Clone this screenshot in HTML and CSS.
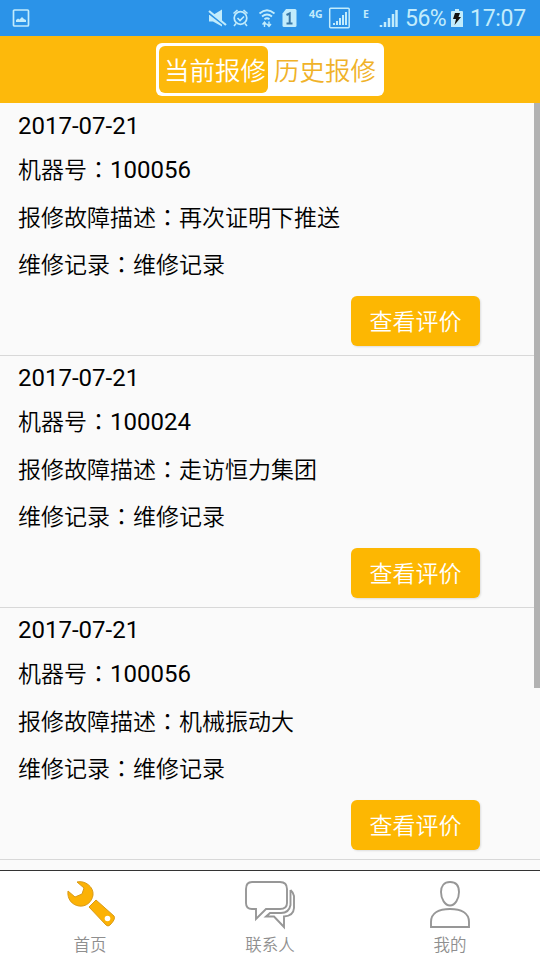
FILE: index.html
```html
<!DOCTYPE html>
<html lang="zh-CN">
<head>
  <meta charset="UTF-8"/>
  <meta content="width=device-width, initial-scale=1.0" name="viewport"/>
  <title>当前报修</title>
  <link rel="stylesheet" href="styles.css">
</head>
<body>
<div class="app">
  <div class="status-bar">
    <svg class="picture" width="18" height="18" viewBox="0 0 18 18">
      <rect x="1.500" y="1" width="15" height="16" rx="1" fill="none" stroke="currentColor" stroke-width="1.700"/>
      <path d="M4 13v-2l2-1.500 1.500 1L10 8l2 2 2 1v2z" fill="currentColor"/>
    </svg>
    <svg class="status-icons" width="170" height="36" viewBox="200 0 170 36" fill="none" stroke="currentColor">
      <path d="M209 15h4l9-5.500v17l-9-5h-4z" fill="currentColor" stroke="none"/>
      <path d="M208 12.500l18 14" stroke="#2b93e8" stroke-width="2"/>
      <path d="M209 11l17 14" stroke-width="2.200"/>
      <circle cx="240.500" cy="18" r="6.300" stroke-width="1.700"/>
      <path d="M237.500 18l2.500 2.500 4-4M233.500 13.500l4-3.500M247.500 13.500l-4-3.500M236 23.500l-2 2.500M245 23.500l2 2.500" stroke-width="1.600"/>
      <path d="M259.500 13.500q7.500-6.500 15 0M262 16.500q5-4 10 0M264.500 19.200q2.500-2 5 0" stroke-width="1.800"/>
      <path d="M264.500 27v-4M262.500 24.500l2-2.500 2 2.500M269 21.500v4M267 24l2 2.500 2-2.500" stroke-width="1.400"/>
      <path d="M286 9h9q1.500 0 1.500 1.500v15q0 1.500-1.500 1.500h-11q-1.500 0-1.500-1.500v-12z" fill="currentColor" stroke="none"/>
      <path d="M286.500 15l3.200-1.700v10.200M286.500 23.500h6" stroke="#3978a8" stroke-width="2"/>
      <rect x="329.700" y="8.200" width="19.500" height="19.500" rx="1" stroke-width="1.500"/>
      <path d="M334 25v-2M337 25v-4M340 25v-7M343 25v-10M346 25v-13" stroke-width="2"/>
    </svg>
    <span class="net net-4g">4G</span>
    <span class="net net-e">E</span>
    <svg class="signal" width="20" height="20" viewBox="0 0 20 20" stroke="currentColor" stroke-width="2.500">
      <path d="M2 19v-2M6 19v-5M10 19v-9M14 19v-13M17.500 19V2"/>
    </svg>
    <span class="percent">56%</span>
    <svg class="battery" width="12" height="18" viewBox="0 0 12 18">
      <path d="M1 2h3V0h4v2h3q1 0 1 1v15H0V3q0-1 1-1z" fill="currentColor"/>
      <path d="M4 4h5L7.500 8H10l-6.500 8 1.500-6H2z" fill="#111"/>
    </svg>
    <span class="clock">17:07</span>
  </div>

  <div class="header">
    <div class="tabs">
      <div class="tab active">当前报修</div>
      <div class="tab">历史报修</div>
    </div>
  </div>

  <div class="list">
    <div class="card">
      <div class="row date">2017-07-21</div>
      <div class="row">机器号<span class="colon" lang="zh-TW">：</span><span class="num">100056</span></div>
      <div class="row">报修故障描述<span class="colon" lang="zh-TW">：</span>再次证明下推送</div>
      <div class="row">维修记录<span class="colon" lang="zh-TW">：</span>维修记录</div>
      <div class="btn">查看评价</div>
    </div>
    <div class="card">
      <div class="row date">2017-07-21</div>
      <div class="row">机器号<span class="colon" lang="zh-TW">：</span><span class="num">100024</span></div>
      <div class="row">报修故障描述<span class="colon" lang="zh-TW">：</span>走访恒力集团</div>
      <div class="row">维修记录<span class="colon" lang="zh-TW">：</span>维修记录</div>
      <div class="btn">查看评价</div>
    </div>
    <div class="card">
      <div class="row date">2017-07-21</div>
      <div class="row">机器号<span class="colon" lang="zh-TW">：</span><span class="num">100056</span></div>
      <div class="row">报修故障描述<span class="colon" lang="zh-TW">：</span>机械振动大</div>
      <div class="row">维修记录<span class="colon" lang="zh-TW">：</span>维修记录</div>
      <div class="btn">查看评价</div>
    </div>
    <div class="scrollbar"></div>
  </div>

  <div class="nav">
    <div class="nav-item">
      <svg width="52" height="52" viewBox="0 0 52 52">
        <path d="M13 2C21 0 30 7 29 15C28 22 22 27 15 26C8 25 3 19 4 11L11 17L18 14L20 8Z" fill="#fcb205" stroke="#d99a16"/>
        <path d="M32 20L50 36Q52 39 46 45Q44 47 42 45L25 27Z" fill="#fcb205" stroke="#d99a16"/>
        <circle cx="43.500" cy="38.500" r="2.800" fill="#fff"/>
      </svg>
      <span>首页</span>
    </div>
    <div class="nav-item">
      <svg width="52" height="52" viewBox="0 0 52 52" fill="none" stroke="#979797" stroke-width="1.900">
        <path d="M8 2H36Q43 2 43 9V23Q43 29 36 29H22L12 39V29H8Q2 29 2 23V9Q2 2 8 2Z"/>
        <path d="M46.500 10V25Q45 33 37 33H26L22 36.500H30L40 47V36.500Q49.500 36 50 28V16Q49 12 46.500 10"/>
      </svg>
      <span>联系人</span>
    </div>
    <div class="nav-item">
      <svg width="52" height="52" viewBox="0 0 52 52" fill="none" stroke="#979797" stroke-width="1.900">
        <path d="M26 2C32 2 35 6 35 12C35 19 31 25.500 26 25.500C21 25.500 17 19 17 12C17 6 20 2 26 2Z"/>
        <path d="M7 47V42C7 33 15 29 26 29C37 29 45 33 45 42V47Z"/>
      </svg>
      <span>我的</span>
    </div>
  </div>
</div>
</body>
</html>
```

FILE: styles.css
```css
* {
  box-sizing: border-box;
}
body {
  margin: 0;
  font-family: "Noto Sans CJK SC", sans-serif;
  background-color: #fafafa;
  color: #000;
}
.app {
  display: flex;
  flex-direction: column;
  width: 540px;
  height: 960px;
  overflow: hidden;
}
.status-bar {
  display: flex;
  flex: none;
  position: relative;
  align-items: center;
  height: 36px;
  padding-left: 12px;
  background-color: #2b93e8;
  color: #c2ecfc;
  font-family: Roboto, sans-serif;
  font-size: 23px;
  line-height: 40px;
  white-space: nowrap;
}
.status-icons {
  margin-left: 170px;
}
.net {
  position: absolute;
  top: 8px;
  font-family: "Open Sans", sans-serif;
  font-size: 10.5px;
  font-weight: bold;
  line-height: 13px;
}
.net-4g {
  left: 309px;
}
.net-e {
  left: 363px;
}
.signal {
  margin-left: 9px;
}
.percent {
  width: 41px;
  margin-left: 6px;
  padding-top: 2px;
  letter-spacing: -0.5px;
}
.battery {
  margin-left: 5px;
}
.clock {
  margin-left: 7px;
  padding-top: 2px;
  letter-spacing: -0.3px;
}
.header {
  display: flex;
  flex: none;
  justify-content: center;
  height: 67px;
  padding-top: 7px;
  background-color: #fdb90b;
}
.tabs {
  display: flex;
  width: 228px;
  height: 53px;
  padding: 3px;
  border-radius: 6px;
  background-color: #fff;
}
.tab {
  width: 109px;
  height: 47px;
  border-radius: 6px;
  color: #f0b229;
  font-size: 25.5px;
  font-weight: 350;
  line-height: 45px;
  padding-left: 5px;
  white-space: nowrap;
}
.tab.active {
  background-color: #fdb90b;
  color: #fff;
}
.tab + .tab {
  padding-left: 6px;
}
.list {
  position: relative;
  flex: 1;
  padding-top: 1px;
  overflow: hidden;
}
.card {
  height: 252px;
  padding: 0 18px;
  border-bottom: 1px solid #d8d8d8;
  overflow: hidden;
}
.row {
  height: 47.5px;
  font-size: 23px;
  font-weight: 350;
  line-height: 47px;
}
.row.date {
  height: 41px;
  font-family: Roboto, sans-serif;
  font-size: 24px;
  font-weight: 400;
  line-height: 44px;
}
.colon {
  font-family: "Noto Sans CJK TC", sans-serif;
}
.num {
  font-family: Roboto, sans-serif;
  font-size: 24px;
  font-weight: 400;
}
.btn {
  width: 129px;
  height: 50px;
  margin: 8.5px 0 0 333px;
  border-radius: 6px;
  background-color: #fdb702;
  box-shadow: 1px 1px 2px #ddd;
  color: #fff;
  font-size: 23px;
  font-weight: 350;
  line-height: 49px;
  text-align: center;
}
.scrollbar {
  position: absolute;
  top: 0;
  right: 0;
  width: 6px;
  height: 585px;
  background-color: #b2b2b2;
}
.nav {
  display: flex;
  flex: none;
  height: 90px;
  border-top: 1px solid #333;
  background-color: #fff;
}
.nav-item {
  display: flex;
  flex: 1;
  flex-direction: column;
  align-items: center;
  padding-top: 9px;
  color: #8f8f8f;
  font-size: 16.5px;
  font-weight: 350;
  line-height: 25px;
}
```
